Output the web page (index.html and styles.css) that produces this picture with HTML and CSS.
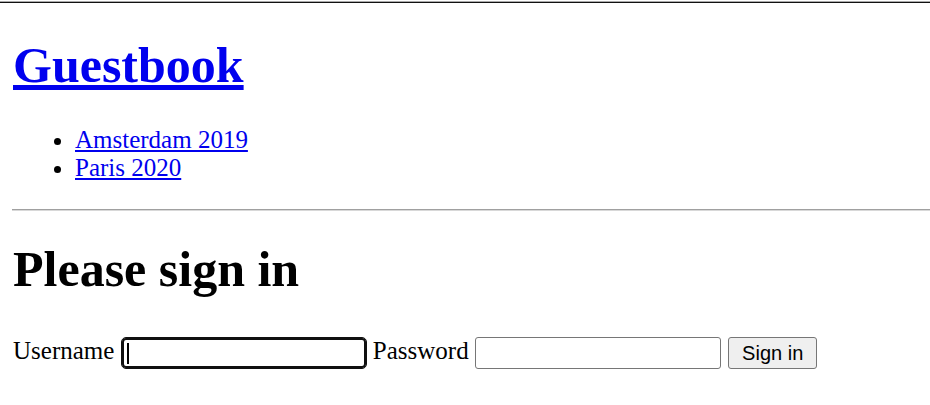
FILE: index.html
```html
<!DOCTYPE html>
<html>
<head>
<meta charset="utf-8">
<link rel="stylesheet" href="styles.css">
</head>
<body>
<div class="topline"></div>
<div class="page">
  <h1 class="title"><a href="#">Guestbook</a></h1>
  <ul class="events">
    <li><a href="#">Amsterdam 2019</a></li>
    <li><a href="#">Paris 2020</a></li>
  </ul>
  <hr class="divider">
  <h2 class="signin-title">Please sign in</h2>
  <form class="signin">
    Username <span class="field-wrap"><input class="field focused" type="text"><span class="caret"></span></span> Password <input class="field" type="password"> <button class="btn" type="button">Sign in</button>
  </form>
</div>
</body>
</html>
```

FILE: styles.css
```css
html, body {
  margin: 0;
  padding: 0;
  background: #fff;
}
body {
  font-family: "Liberation Serif", "Times New Roman", serif;
  font-size: 25px;
  color: #000;
}
.topline {
  height: 1px;
  margin-top: 1px;
  background: #111;
  border-top: 1px solid #aaa;
}
.page {
  padding: 0 0 0 13px;
}
.title {
  font-size: 50px;
  font-weight: bold;
  margin: 34px 0 0 0;
  line-height: 56px;
}
.title a, .events a {
  color: #0000ee;
}
.events {
  margin: 33px 0 0 0;
  padding-left: 62px;
  line-height: 28px;
}
.divider {
  margin: 27px 0 0 -1px;
  border: 0;
  border-top: 1px solid #a0a0a0;
  border-bottom: 1px solid #d8d8d8;
  height: 0;
}
.signin-title {
  font-size: 50px;
  font-weight: bold;
  margin: 32px 0 0 0;
  line-height: 53px;
}
.signin {
  margin-top: 39px;
  line-height: 32px;
}
.field-wrap {
  position: relative;
  display: inline-block;
  vertical-align: middle;
}
.field {
  width: 246px;
  height: 32px;
  box-sizing: border-box;
  border: 1px solid #767676;
  border-radius: 3px;
  padding: 0 6px;
  font-size: 20px;
  vertical-align: middle;
  margin: 0;
  background: #fff;
}
.field.focused {
  display: block;
  border-color: #101010;
  box-shadow: inset 0 0 0 2px #101010;
  border-radius: 5px;
  outline: none;
}
.caret {
  position: absolute;
  left: 6px;
  top: 6px;
  width: 2px;
  height: 21px;
  background: #000;
}
.btn {
  font-family: "Liberation Sans", Arial, sans-serif;
  font-size: 20px;
  width: 89px;
  height: 32px;
  box-sizing: border-box;
  border: 1px solid #767676;
  border-radius: 3px;
  background: #efefef;
  color: #000;
  padding: 0;
  vertical-align: middle;
  margin: 0 0 0 1px;
}
```
